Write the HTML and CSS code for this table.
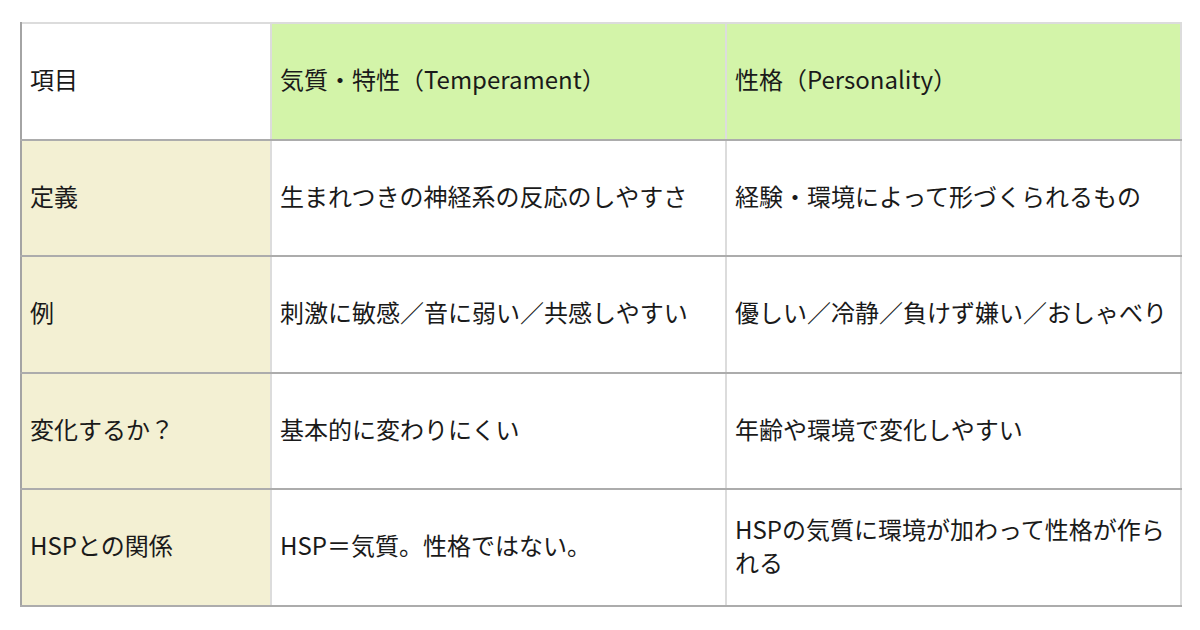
FILE: index.html
```html
<!DOCTYPE html>
<html lang="ja">
<head>
<meta charset="utf-8">
<link rel="stylesheet" href="styles.css">
</head>
<body>
<table class="cmp">
  <colgroup>
    <col class="c1">
    <col class="c2">
    <col class="c3">
  </colgroup>
  <thead>
    <tr>
      <th class="corner">項目</th>
      <th class="head">気質・特性（Temperament）</th>
      <th class="head">性格（Personality）</th>
    </tr>
  </thead>
  <tbody>
    <tr>
      <th class="label">定義</th>
      <td>生まれつきの神経系の反応のしやすさ</td>
      <td>経験・環境によって形づくられるもの</td>
    </tr>
    <tr>
      <th class="label">例</th>
      <td>刺激に敏感／音に弱い／共感しやすい</td>
      <td>優しい／冷静／負けず嫌い／おしゃべり</td>
    </tr>
    <tr>
      <th class="label">変化するか？</th>
      <td>基本的に変わりにくい</td>
      <td>年齢や環境で変化しやすい</td>
    </tr>
    <tr>
      <th class="label">HSPとの関係</th>
      <td>HSP＝気質。性格ではない。</td>
      <td>HSPの気質に環境が加わって性格が作られる</td>
    </tr>
  </tbody>
</table>
</body>
</html>
```

FILE: styles.css
```css
html, body {
  margin: 0;
  background: #ffffff;
}
body {
  padding: 22px 20px 0 20px;
  font-family: "Noto Sans CJK JP", "Noto Sans", sans-serif;
  color: #1a1a1a;
}
.cmp {
  width: 1160px;
  border-collapse: collapse;
  table-layout: fixed;
  font-size: 24px;
  line-height: 1.4;
  border-top: 2px solid #dcdcdc;
  border-left: 2px solid #a4a4a4;
  border-right: 2px solid #dcdcdc;
}
.c1 { width: 250px; }
.c2 { width: 455px; }
.c3 { width: 455px; }
.cmp th,
.cmp td {
  height: 116.6px;
  padding: 0 10px 5px 8px;
  text-align: left;
  vertical-align: middle;
  font-weight: normal;
  border-left: 2px solid #dcdcdc;
  border-right: 2px solid #dcdcdc;
  border-bottom: 2px solid #acacac;
  box-sizing: border-box;
}
.cmp .corner {
  background: #ffffff;
  border-left: 2px solid #a4a4a4;
}
.cmp .label {
  background: #f3f0d3;
  border-left: 2px solid #a4a4a4;
}
.cmp .head {
  background: #d3f4a9;
}
.cmp td {
  background: #ffffff;
}
```
